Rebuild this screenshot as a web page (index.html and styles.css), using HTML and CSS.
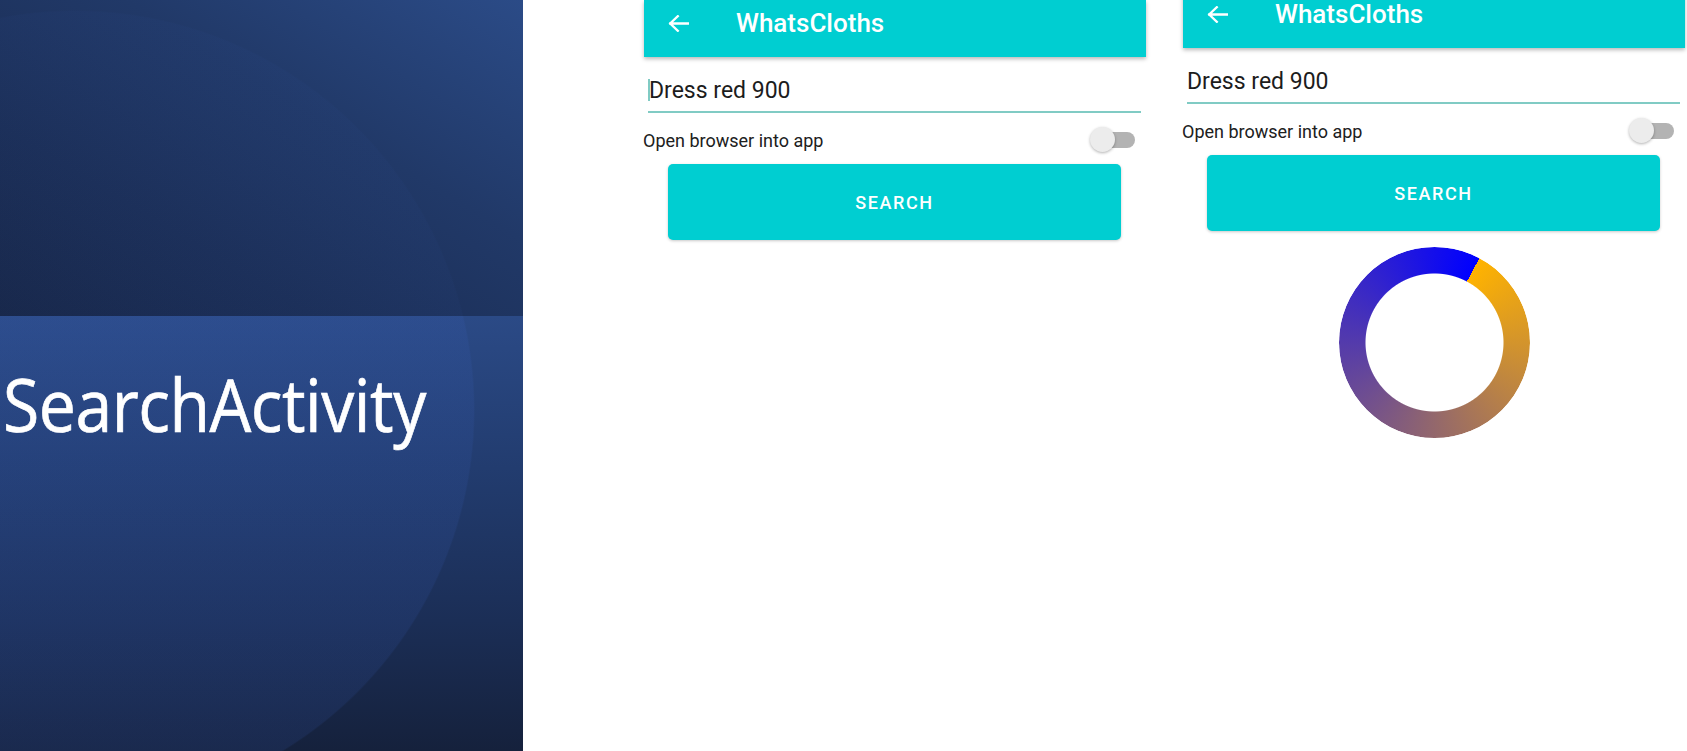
FILE: index.html
```html
<!DOCTYPE html>
<html lang="en">
<head>
<meta charset="utf-8">
<title>SearchActivity</title>
<link rel="stylesheet" href="styles.css">
</head>
<body>
<div class="page">
  <section class="slide">
    <div class="slide-top"></div>
    <div class="slide-bottom">
      <h1 class="slide-title">SearchActivity</h1>
    </div>
  </section>

  <div class="phone phone-a">
    <header class="appbar">
      <svg class="back" width="21" height="17" viewBox="0 0 21 17"><path d="M20 8.5H2.2M9.8 1.2L2.2 8.5L9.8 15.8" fill="none" stroke="#fff" stroke-width="2.3" stroke-linecap="square"/></svg>
      <span class="appbar-title">WhatsCloths</span>
    </header>
    <div class="field"><span class="cursor"></span>Dress red 900</div>
    <div class="switch-row">
      <span class="switch-label">Open browser into app</span>
      <span class="switch"><span class="track"></span><span class="thumb"></span></span>
    </div>
    <div class="btn">SEARCH</div>
  </div>

  <div class="phone phone-b">
    <header class="appbar">
      <svg class="back" width="21" height="17" viewBox="0 0 21 17"><path d="M20 8.5H2.2M9.8 1.2L2.2 8.5L9.8 15.8" fill="none" stroke="#fff" stroke-width="2.3" stroke-linecap="square"/></svg>
      <span class="appbar-title">WhatsCloths</span>
    </header>
    <div class="field">Dress red 900</div>
    <div class="switch-row">
      <span class="switch-label">Open browser into app</span>
      <span class="switch"><span class="track"></span><span class="thumb"></span></span>
    </div>
    <div class="btn">SEARCH</div>
    <div class="ring"></div>
  </div>
</div>
</body>
</html>
```

FILE: styles.css
```css
html, body {
  margin: 0;
  padding: 0;
  background: #ffffff;
}

.page {
  display: flex;
  height: 751px;
  overflow: hidden;
}

/* ---------- slide panel ---------- */
.slide {
  width: 523px;
  flex-shrink: 0;
  display: flex;
  flex-direction: column;
}

.slide-top {
  height: 316px;
  background:
    radial-gradient(circle 400px at 75px 410px, rgba(60, 100, 200, 0.04) 99.6%, rgba(60, 100, 200, 0) 100%),
    linear-gradient(to bottom left, #2b4b87 0%, #213968 38%, #1b2e56 70%, #172647 100%);
}

.slide-bottom {
  flex: 1;
  background:
    radial-gradient(circle 400px at 75px 94px, rgba(60, 100, 200, 0.13) 99.6%, rgba(60, 100, 200, 0) 100%),
    linear-gradient(to bottom, #2b4a86 0%, #223c6f 35%, #1b2e56 70%, #15213c 100%);
}

.slide-title {
  margin: 51px 0 0 3px;
  font-family: "Open Sans", "Noto Sans", sans-serif;
  font-weight: 400;
  font-size: 73px;
  line-height: 73px;
  color: #ffffff;
  letter-spacing: -0.5px;
  -webkit-text-stroke: 0.7px #ffffff;
  transform: scaleX(0.905);
  transform-origin: 0 50%;
}

/* ---------- phone screens ---------- */
.phone {
  width: 502px;
  flex-shrink: 0;
  display: flex;
  flex-direction: column;
  font-family: Roboto, "Liberation Sans", sans-serif;
}

.phone-a {
  margin-left: 121px;
}

.phone-b {
  margin-left: 37px;
  margin-top: -9px;
}

.appbar {
  height: 57px;
  box-sizing: border-box;
  padding-bottom: 11px;
  background: #00ced1;
  display: flex;
  align-items: center;
  box-shadow: 0 2px 4px rgba(0, 0, 0, 0.28);
  position: relative;
  z-index: 1;
}

.back {
  margin-left: 24px;
  flex-shrink: 0;
}

.appbar-title {
  margin-left: 47px;
  font-size: 26px;
  font-weight: 500;
  line-height: 1;
  color: #ffffff;
}

.field {
  margin: 12px 5px 0 4px;
  height: 42px;
  border-bottom: 2px solid #80cbc4;
  display: flex;
  align-items: center;
  font-size: 23px;
  color: #1c1c1c;
}

.cursor {
  display: inline-block;
  width: 2px;
  height: 22px;
  background: #80cbc4;
  margin-right: -1px;
}

.switch-row {
  height: 30px;
  margin: 12px 11px 0 -1px;
  display: flex;
  align-items: center;
  justify-content: space-between;
}

.switch-label {
  font-size: 18px;
  color: #202020;
}

.switch {
  position: relative;
  width: 45px;
  height: 26px;
}

.track {
  position: absolute;
  left: 7px;
  right: 0;
  top: 5px;
  height: 16px;
  border-radius: 8px;
  background: #b3b3b3;
}

.thumb {
  position: absolute;
  left: 0;
  top: 0;
  width: 25px;
  height: 25px;
  border-radius: 50%;
  background: #ececec;
  box-shadow: 0 1px 3px rgba(0, 0, 0, 0.3);
}

.btn {
  margin: 9px 25px 0 24px;
  height: 76px;
  border-radius: 5px;
  background: #00ced1;
  box-shadow: 0 1px 3px rgba(0, 0, 0, 0.22);
  display: flex;
  align-items: center;
  justify-content: center;
  font-size: 18px;
  font-weight: 500;
  letter-spacing: 1.6px;
  color: #ffffff;
}

.ring {
  width: 191px;
  height: 191px;
  margin: 16px auto 0;
  border-radius: 50%;
  background: conic-gradient(from 28deg, #ffb300, #0000ff);
  -webkit-mask: radial-gradient(circle, transparent 68.5px, #000 69.5px);
  mask: radial-gradient(circle, transparent 68.5px, #000 69.5px);
}
```
